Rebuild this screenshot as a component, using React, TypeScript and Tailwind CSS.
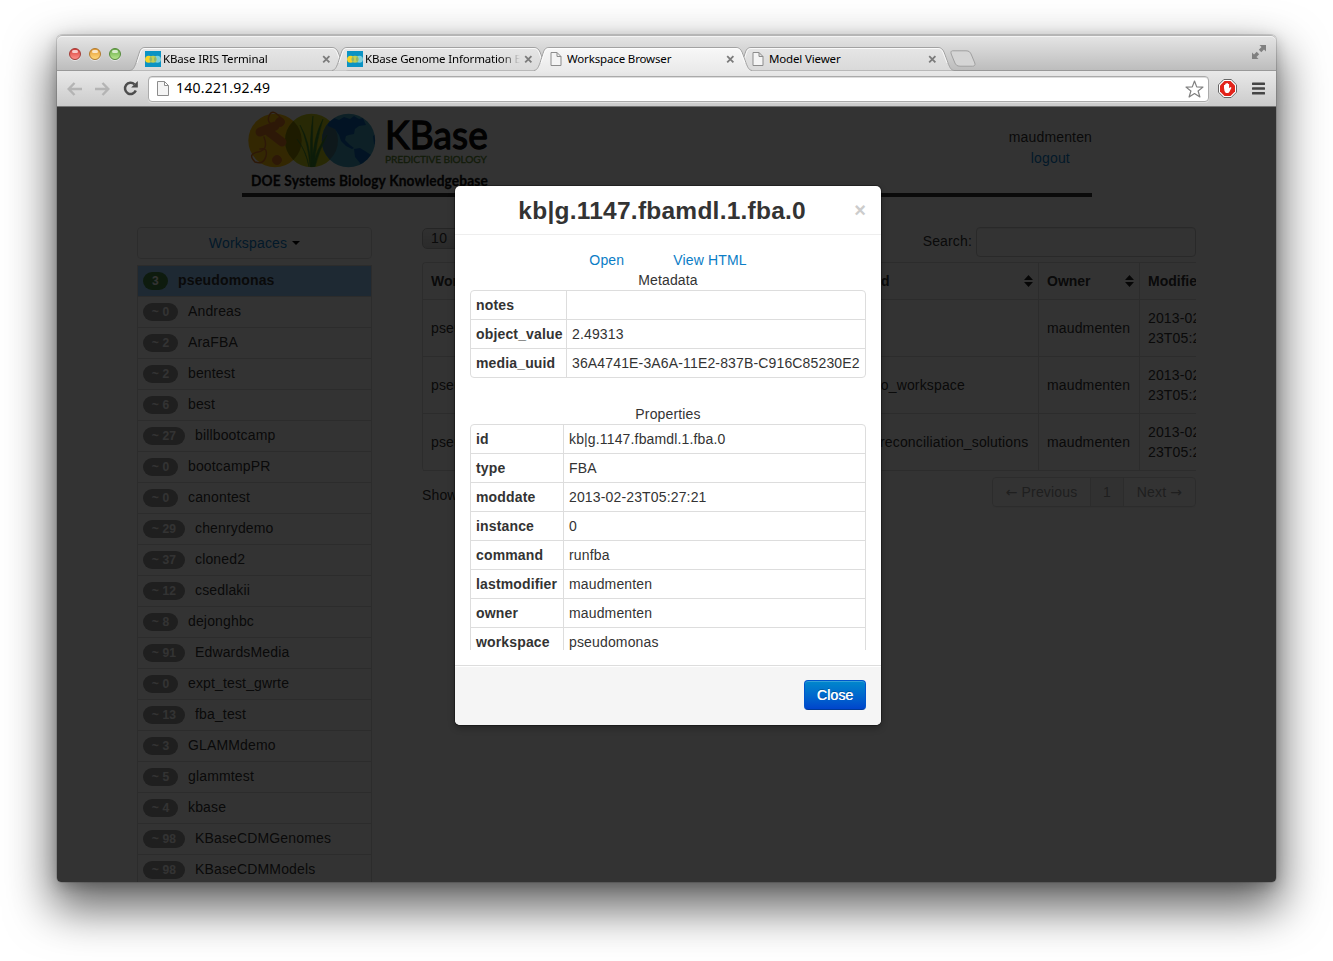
import React from 'react';

const workspaces: [string, string][] = [
  ['3', 'pseudomonas'], ['~ 0', 'Andreas'], ['~ 2', 'AraFBA'], ['~ 2', 'bentest'], ['~ 6', 'best'],
  ['~ 27', 'billbootcamp'], ['~ 0', 'bootcampPR'], ['~ 0', 'canontest'], ['~ 29', 'chenrydemo'],
  ['~ 37', 'cloned2'], ['~ 12', 'csedlakii'], ['~ 8', 'dejonghbc'], ['~ 91', 'EdwardsMedia'],
  ['~ 0', 'expt_test_gwrte'], ['~ 13', 'fba_test'], ['~ 3', 'GLAMMdemo'], ['~ 5', 'glammtest'],
  ['~ 4', 'kbase'], ['~ 98', 'KBaseCDMGenomes'], ['~ 98', 'KBaseCDMModels'],
];

const metadata: [string, string][] = [
  ['notes', ''], ['object_value', '2.49313'], ['media_uuid', '36A4741E-3A6A-11E2-837B-C916C85230E2'],
];

const properties: [string, string][] = [
  ['id', 'kb|g.1147.fbamdl.1.fba.0'], ['type', 'FBA'], ['moddate', '2013-02-23T05:27:21'], ['instance', '0'],
  ['command', 'runfba'], ['lastmodifier', 'maudmenten'], ['owner', 'maudmenten'], ['workspace', 'pseudomonas'],
];

function KBaseFavicon() {
  return (
    <svg width="16" height="16" viewBox="0 0 16 16" className="shrink-0">
      <rect width="16" height="16" fill="#0b93c4" />
      <circle cx="3.600" cy="8.300" r="3.500" fill="#f7d427" />
      <circle cx="12.400" cy="8.300" r="3.500" fill="#7fd0dc" />
      <circle cx="8" cy="8.300" r="3.500" fill="#c3cf54" />
      <path d="M5.800 5.600a3.500 3.500 0 0 0 0 5.400a3.500 3.500 0 0 0 0-5.400M10.200 5.600a3.500 3.500 0 0 0 0 5.400a3.500 3.500 0 0 0 0-5.400" fill="#93b767" />
    </svg>
  );
}

function PageIcon({ big }: { big?: boolean }) {
  return (
    <svg width={big ? 12 : 16} height={big ? 15 : 14} viewBox={big ? '0 0 12 15' : '-1.500 0 16 14'} className="shrink-0">
      {big ? (
        <path d="M.5.5h7l4 4v10H.5zM7.500.5v4h4" fill="#f4f4f4" stroke="#8c8c8c" />
      ) : (
        <path d="M.5.5h6l4 4v9H.5zM6.500.5v4h4" fill="#f4f4f4" stroke="#8c8c8c" />
      )}
    </svg>
  );
}

function Tab({ title, kbase, active }: { title: string; kbase?: boolean; active?: boolean }) {
  return (
    <div className={active ? 'relative z-10 -mr-4 h-6 w-[218px] shrink-0' : 'relative -mr-4 h-6 w-[218px] shrink-0'}>
      <svg className="absolute left-0 top-0" width="218" height="26" viewBox="0 0 218 26">
        <defs>
          <linearGradient id={active ? 'tabOn' : 'tabOff'} x1="0" y1="0" x2="0" y2="1">
            <stop offset="0" stopColor={active ? '#f8f8f8' : '#e6e6e6'} />
            <stop offset="1" stopColor={active ? '#e9e9e9' : '#d9d9d9'} />
          </linearGradient>
        </defs>
        <path
          d={active ? 'M0 25.500V23.500C3 23 4 21 6 16L9.500 5C10.500 2 12 .5 15 .5H202C205 .5 206.500 2 208 5L212 16C214 21 215 23 218 23.500V25.500z' : 'M0 23.500C3 23 4 21 6 16L9.500 5C10.500 2 12 .5 15 .5H202C205 .5 206.500 2 208 5L212 16C214 21 215 23 218 23.500z'}
          fill={active ? 'url(#tabOn)' : 'url(#tabOff)'}
        />
        <path d="M0 23.500C3 23 4 21 6 16L9.500 5C10.500 2 12 .5 15 .5H202C205 .5 206.500 2 208 5L212 16C214 21 215 23 218 23.500" fill="none" stroke="#a2a2a2" />
        <path d="M7 16L10.500 5.500C11.500 2.500 12.500 1.500 15 1.500H202C204.500 1.500 205.500 2.500 207 5.500L211 16" fill="none" stroke="#fff" strokeOpacity=".75" />
      </svg>
      <div className="relative flex h-6 items-center pl-[15px] pr-[17px]">
        {kbase ? <KBaseFavicon /> : <PageIcon />}
        <div className={kbase ? 'ml-0.5 h-4 w-[155px] overflow-hidden whitespace-nowrap bg-gradient-to-r from-black from-[88%] to-black/0 bg-clip-text text-[11.500px] leading-4 tracking-[-0.150px] text-transparent' : 'ml-0.5 h-4 w-[155px] overflow-hidden whitespace-nowrap text-[11.500px] leading-4 tracking-[-0.150px] text-black'}>{title}</div>
        <svg width="9" height="9" viewBox="0 0 9 9" className="ml-[4px]">
          <path d="M1.200 1.200l6.200 6.200M7.400 1.200L1.200 7.400" stroke="#7b7b7b" strokeWidth="1.800" />
        </svg>
      </div>
    </div>
  );
}

function Light({ tone }: { tone: string }) {
  return (
    <div className={'flex size-3 justify-center rounded-full border shadow-[0_1px_0_#ffffff80] ' + tone}>
      <div className="mt-px h-[3px] w-[6px] rounded-full bg-white/70" />
    </div>
  );
}

function BrowserChrome() {
  return (
    <div className="font-['Noto_Sans','Open_Sans',sans-serif]">
      <div className="flex h-9 items-start rounded-t-[5px] border-b border-[#999] bg-gradient-to-b from-[#e6e6e6] to-[#bdbdbd] shadow-[inset_0_1px_0_#b5b5b5,inset_0_2px_0_#f4f4f4]">
        <div className="flex gap-2 pl-3 pt-[13px]">
          <Light tone="border-[#a33b36] bg-gradient-to-b from-[#d33a38] to-[#ff8f8a]" />
          <Light tone="border-[#b27a2c] bg-gradient-to-b from-[#e39a33] to-[#ffd778]" />
          <Light tone="border-[#548a3a] bg-gradient-to-b from-[#69ab48] to-[#b5e58c]" />
        </div>
        <div className="ml-[9px] mt-3 flex">
          <Tab title="KBase IRIS Terminal" kbase />
          <Tab title="KBase Genome Information Browser" kbase />
          <Tab title="Workspace Browser" active />
          <Tab title="Model Viewer" />
        </div>
        <svg className="ml-[12px] mt-[15px]" width="30" height="18" viewBox="0 0 30 18">
          <path d="M4 .8H17.500C20.500 .8 21.800 2 23 5L26.300 13C27 15 26 16.200 24.300 16.200H11.500C8.500 16.200 7.200 15 6 12L2.700 4C2 2 2.700 .8 4 .8z" transform="translate(-1.500 0)" fill="#d5d5d5" stroke="#a0a0a0" />
        </svg>
        <div className="grow" />
        <svg className="mr-[10px] mt-[10px]" width="14" height="14" viewBox="0 0 14 14" fill="#808080">
          <path d="M7.500 0H14v6.500L12 4.500 9.300 7.200 6.800 4.700 9.500 2zM0 7.500L2 9.500 4.700 6.800 7.200 9.300 4.500 12l2 2H0z" />
        </svg>
      </div>
      <div className="flex h-9 items-center border-b border-[#747474] bg-gradient-to-b from-[#e9e9e9] to-[#cbcbcb] pl-[10px]">
        <svg width="15" height="14" viewBox="0 0 15 14" fill="none" stroke="#b4b4b4" strokeWidth="2.400"><path d="M7.500 1L1.700 7l5.800 6M2 7h13" /></svg>
        <svg className="ml-[13px]" width="15" height="14" viewBox="0 0 15 14" fill="none" stroke="#b4b4b4" strokeWidth="2.400"><path d="M7.500 1l5.800 6-5.800 6M13 7H0" /></svg>
        <svg className="ml-[13px]" width="16" height="15" viewBox="0 0 16 15"><path d="M12.800 9.500A5.600 5.600 0 1 1 11.500 3.400" fill="none" stroke="#4d4d4d" strokeWidth="2.500" /><path d="M14.800 0v6.600H8.200z" fill="#4d4d4d" /></svg>
        <div className="ml-[9px] flex h-[26px] w-[1061px] items-center rounded-[4px] border border-[#aaa] bg-white pl-2 pr-[4px] shadow-[inset_0_1px_0_#ddd,0_1px_0_#ffffff60]">
          <PageIcon big />
          <div className="-mt-px ml-[7px] grow text-[14px] leading-5 tracking-[0.220px] text-black">140.221.92.49</div>
          <svg width="19" height="18" viewBox="0 0 19 18"><path d="M9.500 1l2.200 5.900 6.300.2-4.900 3.900 1.800 6-5.400-3.500L4.100 17l1.800-6L1 7.100l6.300-.2z" fill="#fff" stroke="#808080" strokeWidth="1.200" strokeLinejoin="round" /></svg>
        </div>
        <svg className="ml-[9px]" width="19" height="19" viewBox="0 0 19 19">
          <path d="M5.800.5h7.400l5.300 5.300v7.400l-5.300 5.300H5.800L.5 13.200V5.800z" fill="#fff" stroke="#666" />
          <path d="M6.500 2h6L17 6.500v6L12.500 17h-6L2 12.500v-6z" fill="#e2231a" />
          <path d="M6 9V6h1.200V4.800h1.300V4h1.300v1h1.300v4.200l1.400-1.200 1 .8-2.200 4.200-1 1H7.800L6.500 12z" fill="#fff" />
        </svg>
        <svg className="ml-[15px]" width="13" height="13" viewBox="0 0 13 13"><path d="M1 1.700h11M1 6.500h11M1 11.300h11" stroke="#454545" strokeWidth="2.600" strokeLinecap="round" /></svg>
      </div>
    </div>
  );
}

function Logo() {
  return (
    <svg width="250" height="86" viewBox="0 0 250 86">
      <defs>
        <clipPath id="globe"><circle cx="106.500" cy="33.500" r="26.500" /></clipPath>
        <clipPath id="grass"><circle cx="69.500" cy="33.500" r="26.500" /></clipPath>
      </defs>
      <circle cx="33" cy="33.500" r="26.700" fill="#ffc20e" />
      <circle cx="69.500" cy="33.500" r="26.700" fill="#c9cc1a" />
      <circle cx="106.500" cy="33.500" r="26.700" fill="#41a0bd" />
      <g clipPath="url(#grass)">
        <circle cx="33" cy="33.500" r="26.700" fill="#8f8500" />
        <circle cx="106.500" cy="33.500" r="26.700" fill="#457a88" />
        <path d="M68 60Q66 35 58 18Q68 34 69 60zM69 60Q67 32 71 9Q70 35 71 60zM70 60Q71 30 81 12Q74 35 72 60zM71 60Q74 42 85 28Q77 44 73 60zM67 60Q65 45 55 32Q63 42 67 60z" fill="#3f8a2f" stroke="#3f8a2f" strokeWidth=".5" />
      </g>
      <g fill="#e07a26" stroke="#e07a26" strokeLinecap="round">
        <path d="M18 25L33 19M27 25L40 35" strokeWidth="9" />
        <circle cx="38" cy="15" r="4.500" />
        <circle cx="35" cy="53" r="4.500" />
        <path d="M38 10Q30 1 27 9T34 18M22 30Q27 43 16 45T13 55Q22 58 24 49T18 42" strokeWidth="1.500" fill="none" />
      </g>
      <g clipPath="url(#globe)" fill="#0b62b4">
        <path d="M85 15L92 11 97 13 102 10 108 12 112 9 117 12 121 11 124 18 117 19 113 22 112 27 107 28 104 29 103 33 106 36 108 38 112 41 110 42 104 39 99 34 97 28 93 22 86 19zM112 42L118 41 123 44 129 48 128 53 123 57 119 63 116 64 118 56 113 50zM131 29L136 26 136 40 132 37z" />
      </g>
      <text x="143" y="41.500" textLength="103" lengthAdjust="spacingAndGlyphs" fontFamily="Lato, sans-serif" fontSize="39" stroke="#0a0a0a" strokeWidth="1.300" fill="#0a0a0a">KBase</text>
      <text x="143" y="55.700" textLength="102" lengthAdjust="spacing" fontFamily="Lato, sans-serif" fontSize="10.200" fill="#5b8a30" stroke="#5b8a30" strokeWidth=".3">PREDICTIVE BIOLOGY</text>
      <text x="9" y="78.500" textLength="237" lengthAdjust="spacingAndGlyphs" fontFamily="Lato, sans-serif" fontWeight="700" fontSize="15" fill="#111" stroke="#111" strokeWidth=".3">DOE Systems Biology Knowledgebase</text>
    </svg>
  );
}

function Sidebar() {
  return (
    <div className="w-[235px] shrink-0">
      <div className="flex h-8 items-center justify-center gap-[5px] rounded-[4px] border border-[#ddd] text-[#0b7dcc]">
        <span>Workspaces</span>
        <span className="border-x-4 border-t-4 border-x-transparent border-t-black" />
      </div>
      <div className="mt-[6px] border-x border-t border-[#ddd]">
        {workspaces.map(([count, name], i) => (
          <div key={name} className={i === 0 ? 'flex h-[31px] items-center border-b border-[#ddd] bg-[#97cbff] pb-[2px] pl-[5px] font-bold' : 'flex h-[31px] items-center border-b border-[#ddd] pb-[2px] pl-[5px]'}>
            <span className={(i === 0 ? 'w-[25px] bg-[#468847]' : count.length > 3 ? 'w-[42px] bg-[#999]' : 'w-[35px] bg-[#999]') + ' mr-[10px] mt-px h-[18px] rounded-full text-center text-[12px] font-bold leading-[18px] text-white'}>{count}</span>
            <span>{name}</span>
          </div>
        ))}
      </div>
    </div>
  );
}

function SortIcon() {
  return (
    <svg width="9" height="12" viewBox="0 0 9 12" className="shrink-0"><path d="M4.500 0L9 5H0zM4.500 12L0 7h9z" fill="#222" /></svg>
  );
}

function ObjectRow({ command }: { command: string }) {
  return (
    <div className="flex h-[57px] items-stretch border-b border-[#ddd]">
      <div className="flex w-[391px] items-center border-r border-[#ddd] pl-2">pseudomonas</div>
      <div className="flex w-[225px] items-center justify-end border-r border-[#ddd] pr-2">
        <div className="w-[208px] whitespace-nowrap">{command}</div>
      </div>
      <div className="flex w-[101px] shrink-0 items-center border-r border-[#ddd] pl-2">maudmenten</div>
      <div className="flex w-[120px] shrink-0 items-center pl-2"><div>2013-02-<br />23T05:27:21</div></div>
    </div>
  );
}

function ObjectTable() {
  return (
    <div className="ml-[50px] w-[774px] shrink-0">
      <div className="flex h-[35px] items-start">
        <div className="mt-px h-[21px] w-[60px] rounded-[5px] border border-[#bbb] bg-gradient-to-b from-[#f2f2f2] to-[#d5d5d5] pl-2 text-[14px] leading-[19px] tracking-[0.400px]">10</div>
        <div className="ml-2">records per page</div>
        <div className="grow" />
        <div className="mt-1">Search:</div>
        <div className="ml-[4px] h-[30px] w-[220px] rounded-[4px] border border-[#ccc] bg-white shadow-[inset_0_1px_1px_#00000013]" />
      </div>
      <div className="overflow-hidden">
        <div className="w-[840px] rounded-l-[4px] border-l border-t border-[#ddd]">
          <div className="flex h-[37px] items-stretch border-b border-[#ddd] font-bold tracking-normal">
            <div className="flex w-[391px] items-center border-r border-[#ddd] pl-2">Workspace</div>
            <div className="flex w-[225px] items-center justify-between border-r border-[#ddd] pl-[7px] pr-[5px]"><span>Command</span><SortIcon /></div>
            <div className="flex w-[101px] shrink-0 items-center justify-between border-r border-[#ddd] pl-2 pr-[5px]"><span>Owner</span><SortIcon /></div>
            <div className="flex w-[120px] shrink-0 items-center pl-2">Modified</div>
          </div>
          <ObjectRow command="" />
          <ObjectRow command="module_to_workspace" />
          <ObjectRow command="process_reconciliation_solutions" />
        </div>
      </div>
      <div className="mt-[6px] flex justify-between">
        <div className="mt-2">Showing 1 to 3 of 3 entries</div>
        <div className="flex h-[30px] w-[204px] rounded-[4px] border border-[#ddd] text-center leading-7 text-[#999] shadow-[0_1px_2px_#0000000d]">
          <div className="w-[98px] border-r border-[#ddd]"><span className="font-['DejaVu_Sans']">←</span> Previous</div>
          <div className="w-[33px] border-r border-[#ddd] bg-[#f5f5f5]">1</div>
          <div className="grow">Next <span className="font-['DejaVu_Sans']">→</span></div>
        </div>
      </div>
    </div>
  );
}

function KeyValueTable({ rows, narrow }: { rows: [string, string][]; narrow?: boolean }) {
  return (
    <div className="rounded-[4px] border border-[#ddd]">
      {rows.map(([key, value], i) => (
        <div key={key} className={i === 0 ? 'flex h-7' : 'flex h-[29px] border-t border-[#ddd]'}>
          <div className={(narrow ? 'w-[93px]' : 'w-24') + ' shrink-0 border-r border-[#ddd] pl-[5px] pt-1 font-bold'}>{key}</div>
          <div className="whitespace-nowrap pl-[5px] pt-1">{value}</div>
        </div>
      ))}
    </div>
  );
}

function ObjectModal() {
  return (
    <div className="absolute left-[398px] top-[79px] w-[426px] rounded-[5px] bg-white shadow-[0_3px_7px_#0000004d,0_0_0_1px_#0000004d]">
      <div className="flex h-[49px] items-center border-b border-[#eee] pl-[15px] pr-[15px]">
        <h3 className="grow pt-px text-center text-[24.500px] font-bold leading-10 tracking-[0.240px]">kb|g.1147.fbamdl.1.fba.0</h3>
        <span className="text-[20px] font-bold leading-5 tracking-normal text-[#ccc]">×</span>
      </div>
      <div className="p-[15px]">
        <div className="h-[400px] overflow-hidden">
          <div className="flex h-5 justify-center gap-[49px] text-[#0b7dc6]"><a>Open</a><a>View HTML</a></div>
          <div className="h-5 text-center">Metadata</div>
          <KeyValueTable rows={metadata} />
          <div className="mt-[26px] h-5 text-center">Properties</div>
          <KeyValueTable rows={properties} narrow />
        </div>
      </div>
      <div className="flex h-[60px] justify-end rounded-b-[5px] border-t border-[#ddd] bg-[#f5f5f5] pr-[15px] pt-[14px] shadow-[inset_0_1px_0_#fff]">
        <button className="h-[30px] w-[62px] rounded-[4px] border border-[#0055cc] border-b-[#003a9a] bg-gradient-to-b from-[#0088cc] to-[#0044cc] leading-7 text-white shadow-[inset_0_1px_0_#ffffff33] [text-shadow:0_-1px_0_#00000040,0.5px_0_0_#fff]">Close</button>
      </div>
    </div>
  );
}

export default function App() {
  return (
    <div className="h-[961px] w-[1333px] overflow-hidden bg-white pl-[57px] pt-[35px]">
      <div className="h-[847px] w-[1219px] rounded-[5px] shadow-[0_22px_46px_5px_#00000099,0_4px_14px_#00000038,0_0_0_1px_#00000020]">
        <BrowserChrome />
        <div className="relative h-[775px] overflow-hidden rounded-b-[4px] bg-white font-['Liberation_Sans',Arial,sans-serif] text-[14px] leading-5 tracking-[0.150px] text-[#333]">
          <div className="ml-[185px] flex h-[90px] w-[850px] justify-between border-b-4 border-[#333]">
            <Logo />
            <div className="pt-5 text-center leading-[21px]">
              <div>maudmenten</div>
              <div className="text-[#0b7dcc]">logout</div>
            </div>
          </div>
          <div className="ml-20 mt-[30px] flex">
            <Sidebar />
            <ObjectTable />
          </div>
          <div className="absolute inset-0 bg-black/80" />
          <ObjectModal />
        </div>
      </div>
    </div>
  );
}
